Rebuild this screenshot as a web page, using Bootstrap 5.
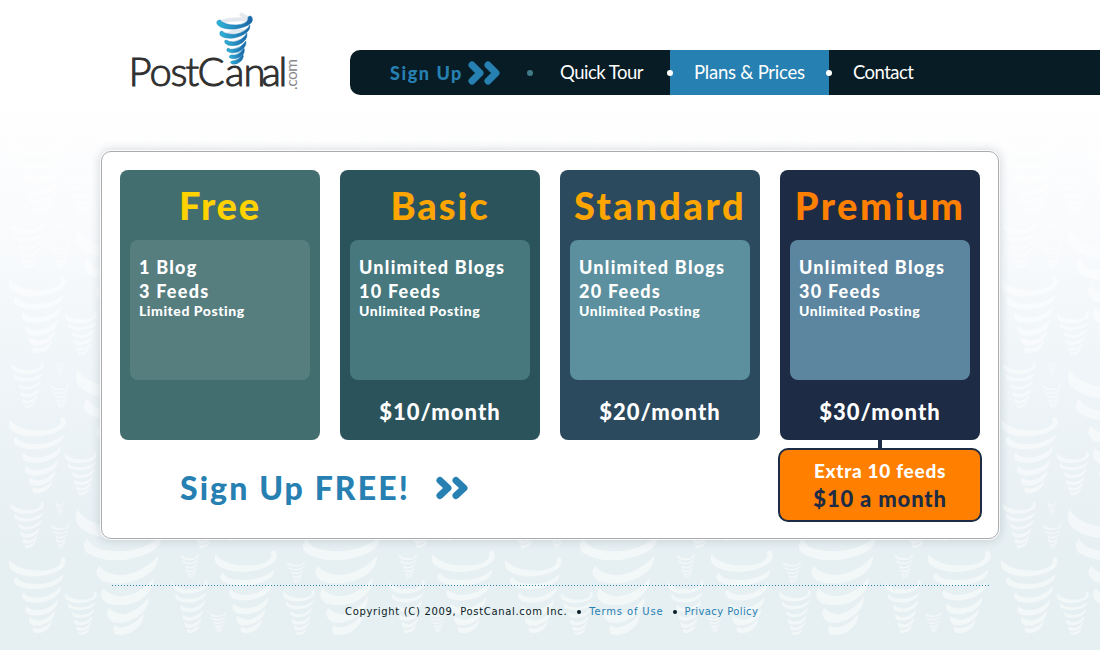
<!DOCTYPE html>
<html lang="en">
<head>
<meta charset="utf-8">
<meta name="viewport" content="width=device-width, initial-scale=1">
<title>PostCanal - Plans &amp; Prices</title>
<link href="https://cdn.jsdelivr.net/npm/bootstrap@5.3.0/dist/css/bootstrap.min.css" rel="stylesheet">
<style>
body{font-family:Lato,"Liberation Sans",sans-serif;color:#081c25;height:650px;overflow:hidden;
  background:linear-gradient(#fff 95px,#fafbfd 220px,#eff5f8 370px,#e6eff2 560px);font-kerning:normal}
a{text-decoration:none}
.backdrop{top:0;left:0;z-index:-1}
.brand{width:350px;height:150px;flex:none}
.topnav{margin-top:50px;height:45px;background:#081c25;border-radius:10px 0 0 10px;padding-left:40px;font-size:18.5px;line-height:45px}
.topnav a{color:#fff;white-space:nowrap}
.topnav .join{color:#2780b2;font-weight:900;font-size:18px;letter-spacing:1.55px;width:137px;padding-top:1px}
.topnav .current{background:#2780b2;width:159px;padding-left:24px;letter-spacing:-.24px}
.dot{width:6px;height:6px;border-radius:50%;background:#fff;top:20px;z-index:1}
.join .dot{left:137px;background:#417a88}
.current .dot:first-child{left:-3px}
.current .dot:last-child{right:-3px}
.panel{width:898px;height:388px;margin:1px 0 0 101px;background:#fff;border:1px solid #a9abad;border-radius:10px;box-shadow:0 0 0 1px #f9fafb,0 0 9px 2px rgba(70,90,100,.2);padding:18px}
.plan{width:200px;height:270px;border-radius:8px;padding:0 10px;color:#fff;font-weight:900}
.plan h2{font-size:38px;line-height:70px;height:70px;font-weight:900;margin:0;white-space:nowrap;display:flex;justify-content:center}
.feat{height:140px;border-radius:8px;padding:15px 9px;font-size:18px;line-height:24px;letter-spacing:1.25px;white-space:nowrap}
.feat small{display:block;font-size:14px;line-height:15px;letter-spacing:.55px;font-variant-ligatures:none}
.price{font-size:22px;line-height:60px;letter-spacing:1px;padding-top:2px}
.signup{margin:18px 0 0 60px;font-size:32px;line-height:60px;font-weight:900;letter-spacing:2.1px;color:#2780b2}
.extra{width:204px;height:74px;margin-right:-2px;margin-top:8px;background:#ff8000;border:2px solid #1d2c44;border-radius:10px;font-weight:900;color:#fff;font-size:19px;line-height:26px;letter-spacing:.7px;padding-top:8px}
.extra strong{display:block;font-size:22px;line-height:30px;letter-spacing:.82px;color:#1d2c44;font-weight:900}
.extra::before{content:"";position:absolute;left:98px;top:-10px;width:4px;height:9px;background:#1d2c44}
footer{margin:46px 110px 0 112px;font:10px/14px "DejaVu Sans",sans-serif;white-space:nowrap}
footer a{color:#2780b2}
.rule{height:1px;background:repeating-linear-gradient(90deg,#2780b2 0 1px,transparent 1px 3px)}
.bull{width:4px;height:4px;border-radius:50%;background:#081c25}
</style>
</head>
<body>
<svg class="backdrop position-absolute" width="1100" height="650" aria-hidden="true">
  <defs>
    <symbol id="twister" viewBox="0 0 165 225" preserveAspectRatio="none">
      <path d="M2 8Q-5 28 8 40Q48 68 115 52Q172 36 163 6Q158-4 149 2Q157 30 108 39Q30 45 2 8Z"/>
      <path d="M21 58Q8 70 19 82Q54 103 106 92Q158 80 158 51Q120 85 64 79Q28 77 21 58Z"/>
      <path d="M42 105Q31 119 47 131Q80 142 114 129Q151 115 151 87Q120 120 80 121Q52 119 42 105Z"/>
      <path d="M50 144Q40 160 58 171Q86 178 114 166Q144 150 142 126Q120 154 84 158Q60 156 50 144Z"/>
      <path d="M60 178Q51 192 68 203Q92 207 113 193Q134 180 134 158Q116 183 88 189Q70 188 60 178Z"/>
      <path d="M70 208Q64 223 76 225Q99 226 112 213Q125 202 124 187Q110 207 86 212Q76 212 70 208Z"/>
    </symbol>
    <pattern id="storm" width="496" height="140" patternUnits="userSpaceOnUse" y="365">
      <g fill="#fff">
        <use href="#twister" x="9" y="52" width="57" height="76"/>
        <use href="#twister" x="65" y="87" width="32" height="43"/>
        <use href="#twister" x="181" y="49" width="18" height="24"/>
        <use href="#twister" x="215" y="46" width="62" height="82"/>
        <use href="#twister" x="172" y="75" width="36" height="53"/>
        <use href="#twister" x="210" y="107" width="16" height="20"/>
        <use href="#twister" x="287" y="56" width="18" height="22"/>
        <use href="#twister" x="283" y="85" width="32" height="45"/>
        <use href="#twister" x="399" y="49" width="18" height="24"/>
        <use href="#twister" x="432" y="46" width="63" height="82"/>
        <use href="#twister" x="389" y="75" width="36" height="53"/>
        <use href="#twister" x="429" y="107" width="16" height="20"/>
        <use href="#twister" x="76" y="0" width="90" height="130"/>
        <use href="#twister" x="295" y="0" width="90" height="130"/>
        <use href="#twister" x="11" y="-3" width="33" height="46"/>
        <use href="#twister" x="11" y="137" width="33" height="46"/>
        <use href="#twister" x="55" y="-3" width="9" height="13"/>
        <use href="#twister" x="55" y="137" width="9" height="13"/>
        <use href="#twister" x="51" y="19" width="18" height="24"/>
        <use href="#twister" x="186" y="-3" width="32" height="46"/>
        <use href="#twister" x="403" y="-3" width="32" height="46"/>
        <use href="#twister" x="221" y="11" width="20" height="25"/>
        <use href="#twister" x="438" y="11" width="20" height="25"/>
      </g>
    </pattern>
  </defs>
  <rect y="95" width="1100" height="543" fill="url(#storm)" opacity=".48"/>
</svg>

<header class="d-flex">
  <svg class="brand" viewBox="0 0 350 150" role="img" aria-label="PostCanal.com">
    <defs><linearGradient id="spin"><stop stop-color="#2fb4d8"/><stop offset="1" stop-color="#1b62a4"/></linearGradient></defs>
    <path d="M220 22Q233 18 250 20M240 14Q247 17 250 20" fill="none" stroke="#e3e8ee" stroke-width="4"/>
    <path d="M224 35Q235 30 246 31M228 45Q237 40 243 41M231 53Q237 49 240 50" fill="none" stroke="#e3e8ee" stroke-width="3"/>
    <g fill="url(#spin)" stroke="#2584b8" stroke-width=".5">
      <path d="M220 20Q216 20 217 24Q221 30 236 29Q252 26 252.500 20Q252 14 248 17Q249 24 236 25Q224 25 220 20Z"/>
      <path d="M222 31Q219 31 220 35Q224 39 234 38Q251 34 250 25Q246 32 236 34Q226 35 222 31Z"/>
      <path d="M226 40Q224 40 225 43Q229 47 238 45Q248 41 247 33Q243 40 234 42Q229 42 226 40Z"/>
      <path d="M228 48Q226 49 227 51Q231 54 238 52Q247 48 246 41Q241 48 234 49Q230 50 228 48Z"/>
      <path d="M231 55Q228 56 230 58Q235 60 240 57Q246 53 244 48Q240 54 235 55Z"/>
      <path d="M232 61Q229 62 232 64Q238 65 242 60Q244 57 243 54Q238 61 232 61Z"/>
    </g>
    <text y="86" font-size="40" font-weight="300" fill="#303030" stroke="#303030" stroke-width="1" x="128.500 149.500 170.500 185.500 197.500 225 243.500 261.500 278.500">PostCanal</text>
    <text transform="translate(297 90) rotate(-90)" font-size="15.500" font-weight="400" fill="#888" textLength="31">.com</text>
  </svg>
  <nav class="topnav d-flex flex-grow-1">
    <a href="#" class="join position-relative d-flex align-items-center">Sign Up
      <svg style="margin:-1px 0 0 4px" width="34" height="26" viewBox="0 0 34 26"><path d="M5 5 13 13 5 21M21 5 29 13 21 21" fill="none" stroke="#2780b2" stroke-width="7" stroke-linecap="round" stroke-linejoin="round"/></svg>
      <i class="dot position-absolute"></i></a>
    <a href="#" style="width:143px;padding-left:33px;letter-spacing:-.5px">Quick Tour</a>
    <a href="#" class="current position-relative"><i class="dot position-absolute"></i>Plans &amp; Prices<i class="dot position-absolute"></i></a>
    <a href="#" style="padding-left:24px;letter-spacing:-.55px">Contact</a>
  </nav>
</header>

<main class="panel">
  <div class="d-flex justify-content-between">
    <section class="plan" style="background:#436e6f"><h2 style="color:#ffd200;letter-spacing:1.8px">Free</h2>
      <div class="feat" style="background:#577e7f">1 Blog<br>3 Feeds<small>Limited Posting</small></div></section>
    <section class="plan" style="background:#2b535c"><h2 style="color:#ffa500;letter-spacing:1.88px">Basic</h2>
      <div class="feat" style="background:#46787e">Unlimited Blogs<br>10 Feeds<small>Unlimited Posting</small></div>
      <div class="price text-center">$10/month</div></section>
    <section class="plan" style="background:#2b4a5e"><h2 style="color:#ffa500;letter-spacing:2.5px">Standard</h2>
      <div class="feat" style="background:#5c909e">Unlimited Blogs<br>20 Feeds<small>Unlimited Posting</small></div>
      <div class="price text-center">$20/month</div></section>
    <section class="plan" style="background:#1d2c44"><h2 style="color:#ff8000;letter-spacing:2.45px">Premium</h2>
      <div class="feat" style="background:#5c859f">Unlimited Blogs<br>30 Feeds<small>Unlimited Posting</small></div>
      <div class="price text-center">$30/month</div></section>
  </div>
  <div class="d-flex justify-content-between">
    <a href="#" class="signup d-flex align-items-center align-self-start">Sign Up FREE!
      <svg style="margin-left:25px" width="34" height="26" viewBox="0 0 34 26"><path d="M5 5.500 13 13 5 20.500M21 5.500 29 13 21 20.500" fill="none" stroke="#2780b2" stroke-width="7" stroke-linecap="round" stroke-linejoin="round"/></svg></a>
    <div class="extra position-relative text-center">Extra 10 feeds<strong>$10 a month</strong></div>
  </div>
</main>

<footer>
  <div class="rule"></div>
  <div class="d-flex align-items-center" style="padding:19px 0 0 233px">
    <span style="letter-spacing:.67px">Copyright (C) 2009, PostCanal.com Inc.</span><i class="bull" style="margin:0 8px 0 10px"></i>
    <a href="#" style="letter-spacing:.85px">Terms of Use</a><i class="bull" style="margin:0 8px 0 9px"></i>
    <a href="#" style="letter-spacing:.4px">Privacy Policy</a>
  </div>
</footer>
<script src="https://cdn.jsdelivr.net/npm/bootstrap@5.3.0/dist/js/bootstrap.bundle.min.js"></script>
</body>
</html>
